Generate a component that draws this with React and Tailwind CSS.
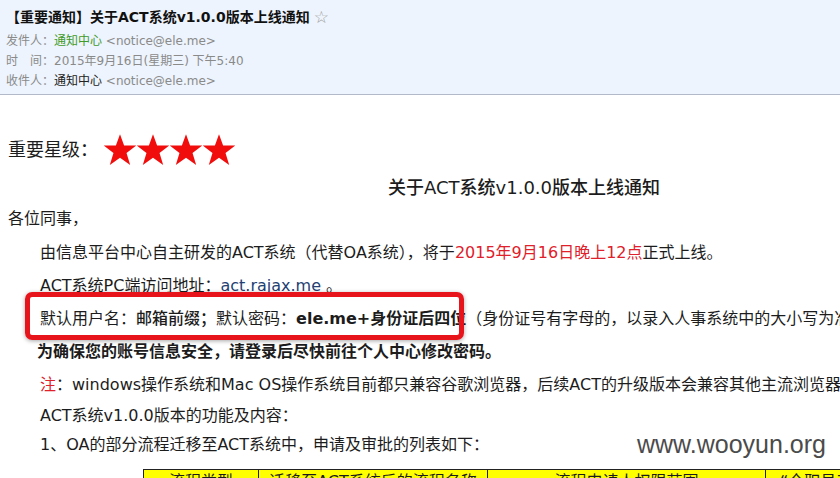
import React from "react";

const bodyFont = { fontFamily: '"DejaVu Sans", "Noto Sans CJK SC", sans-serif' };

function Star() {
    return (
        <svg viewBox="0 0 24 24" className="w-[34px] h-[34px] -mx-[0.5px]">
            <polygon
                points="12,0.8 14.9,8.9 23.5,8.9 16.6,14.1 19.2,22.6 12,17.4 4.8,22.6 7.4,14.1 0.5,8.9 9.1,8.9"
                fill="#f20d0d"
            />
        </svg>
    );
}

export default function App() {
    return (
        <div
            className="relative w-[840px] h-[478px] overflow-hidden bg-white text-[#1c1c1c]"
            style={bodyFont}
        >
            {/* Mail header */}
            <div className="h-[95px] bg-[#edf4fd] border-b border-[#b2bac9] pl-[6px] pt-[8px]">
                <div className="flex items-center gap-[4px] text-[14px] leading-[18px] font-bold text-[#111] whitespace-nowrap">
                    <span>【重要通知】关于ACT系统v1.0.0版本上线通知</span>
                    <span className="font-normal text-[17px] text-[#a0a0a0]">☆</span>
                </div>
                <div className="mt-[5px] text-[12px] leading-[20px] text-[#8a8a8a] whitespace-nowrap">
                    <div>
                        发件人：<span className="text-[#3f9a2a]">通知中心</span> &lt;notice@ele.me&gt;
                    </div>
                    <div>时　间：2015年9月16日(星期三) 下午5:40</div>
                    <div>
                        收件人：<span className="text-[#222]">通知中心</span> &lt;notice@ele.me&gt;
                    </div>
                </div>
            </div>

            {/* Mail body */}
            <div className="pl-[8px] whitespace-nowrap">
                <div className="mt-[38px] flex items-center h-[33px]">
                    <span className="text-[18px] w-[95px]">重要星级：</span>
                    <div className="flex">
                        <Star />
                        <Star />
                        <Star />
                        <Star />
                    </div>
                </div>

                <div className="mt-[10px] pl-[380px] text-[18px] leading-[24px] font-medium">
                    关于ACT系统v1.0.0版本上线通知
                </div>

                <div className="mt-[7px] text-[16px] leading-[24px]">各位同事，</div>

                <div className="mt-[5px] pl-[32px] text-[16px]">
                    <div className="leading-[33px]">
                        由信息平台中心自主研发的ACT系统（代替OA系统），将于
                        <span className="text-[#e0202a]">2015年9月16日晚上12点</span>
                        正式上线。
                    </div>
                    <div className="leading-[33px]">
                        ACT系统PC端访问地址：<span className="text-[#243f73]">act.rajax.me</span> 。
                    </div>
                    <div className="leading-[33px]">
                        默认用户名：<span className="font-medium">邮箱前缀；</span>默认密码：
                        <span className="font-bold">ele.me+身份证后四位</span>
                        （身份证号有字母的，以录入人事系统中的大小写为准）
                    </div>
                    <div className="leading-[33px] -ml-[3px] font-bold">
                        为确保您的账号信息安全，请登录后尽快前往个人中心修改密码。
                    </div>
                    <div className="leading-[33px]">
                        <span className="text-[#e0202a]">注</span>
                        ：windows操作系统和Mac OS操作系统目前都只兼容谷歌浏览器，后续ACT的升级版本会兼容其他主流浏览器。
                    </div>
                    <div className="leading-[29px]">ACT系统v1.0.0版本的功能及内容：</div>
                    <div className="leading-[29px]">1、OA的部分流程迁移至ACT系统中，申请及审批的列表如下：</div>
                </div>

                <div className="mt-[10px] ml-[135px] w-[860px]">
                    <table className="table-fixed w-[822px] border-collapse text-[16px]">
                        <thead>
                            <tr className="bg-[#ffff00]">
                                <th className="w-[115px] border border-[#222] font-normal leading-[20px] py-[2px]">流程类型</th>
                                <th className="w-[229px] border border-[#222] font-normal leading-[20px] py-[2px]">迁移至ACT系统后的流程名称</th>
                                <th className="w-[278px] border border-[#222] font-normal leading-[20px] py-[2px]">流程申请人权限范围</th>
                                <th className="w-[200px] border border-[#222] font-normal leading-[20px] py-[2px] text-left pl-[14px]">“全职员工”</th>
                            </tr>
                        </thead>
                    </table>
                </div>
            </div>

            {/* Annotation box */}
            <div className="absolute left-[25px] top-[292px] w-[439px] h-[48px] border-[5px] border-[#e8141c] rounded-[7px] shadow-[0_1px_4px_rgba(0,0,0,0.35)]" />

            {/* Watermark */}
            <div
                className="absolute left-[637px] top-[429px] text-[25px] leading-[30px] text-[#4b4b4b]"
                style={{ fontFamily: '"Liberation Sans", Arial, sans-serif' }}
            >
                www.wooyun.org
            </div>
        </div>
    );
}
